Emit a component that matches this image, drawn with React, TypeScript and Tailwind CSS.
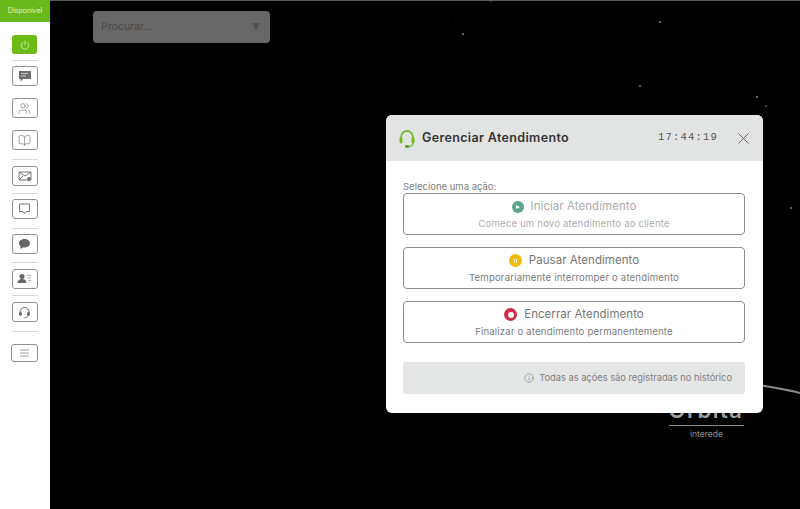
import React from "react";
import { Power, BookOpen, Users, X, Info } from "lucide-react";

const font = { fontFamily: '"Inter","Open Sans","Liberation Sans",sans-serif' };

function Side({ children, wide }: { children: React.ReactNode; wide?: boolean }) {
  return (
    <div className={`mr-px flex items-center justify-center rounded-[3px] border border-[#8f8f8f] bg-white ${wide ? "h-[18px] w-[27px]" : "h-[20px] w-[26px]"}`}>
      {children}
    </div>
  );
}
const Sep = () => <div className="mr-px h-px w-[26px] bg-[#d8d8d8]" />;

const stars: [number, number, number, string][] = [
  [462, 33, 2, "#888"], [659, 21, 2, "#777"], [639, 85, 2, "#777"], [756, 96, 2, "#999"],
  [765, 105, 1.5, "#555"], [490, 38, 1, "#2a2a2a"], [685, 100, 1, "#333"], [790, 207, 2, "#777"],
  [490, 0, 2, "#555"], [455, 18, 1, "#2a2a2a"],
];

function ActionBtn({ icon, title, sub, dim }: { icon: React.ReactNode; title: string; sub: string; dim?: boolean }) {
  return (
    <div className="flex h-[42px] flex-col items-center rounded-[4px] border border-[#8c8c8c] pt-[4px]">
      <div className="flex h-[17px] items-center gap-[7px]">
        {icon}
        <span className={`text-[11.5px] tracking-[0.05px] ${dim ? "text-[#acacac]" : "text-[#767676]"}`}>{title}</span>
      </div>
      <span className={`mt-[2px] text-[9.6px] leading-[14px] tracking-[0.17px] ${dim ? "text-[#adadad]" : "text-[#7c7c7c]"}`}>{sub}</span>
    </div>
  );
}

export default function App() {
  return (
    <div className="relative flex h-[509px] w-[800px] overflow-hidden bg-black" style={font}>
      <aside className="flex w-[50px] shrink-0 flex-col items-center bg-white">
        <div className="flex h-[22px] w-full items-center justify-center bg-[#69b81c] text-[7px] text-[#e4f3d4]">Disponível</div>
        <div className="mr-px mt-[13px] flex h-[19px] w-[25px] items-center justify-center rounded-[3px] bg-[#6cbb14]">
          <Power size={10} className="text-[#d8efbd]" strokeWidth={2} />
        </div>
        <div className="mt-[6px]"><Sep /></div>
        <div className="mt-[5px]"><Side>
          <svg width="14" height="12" viewBox="0 0 14 12"><path d="M1 1h12v8H5L2.500 11.500V9H1z" fill="#6e6e6e" /><path d="M3 3.500h7M3 6h5" stroke="#ddd" strokeWidth="0.8" /></svg>
        </Side></div>
        <div className="mt-[12px]"><Side><Users size={13} strokeWidth={1.2} className="text-[#777]" /></Side></div>
        <div className="mt-[12px]"><Side><BookOpen size={13} strokeWidth={1.2} className="text-[#777]" /></Side></div>
        <div className="mt-[9px]"><Sep /></div>
        <div className="mt-[6px]"><Side>
          <svg width="14" height="12" viewBox="0 0 14 12" fill="none" stroke="#777" strokeWidth="1"><path d="M1 2h12v8H1zM1 2l6 4 6-4M1 10l4-4" /><circle cx="11" cy="9" r="2" fill="#777" stroke="none" /></svg>
        </Side></div>
        <div className="mt-[7px]"><Sep /></div>
        <div className="mt-[5px]"><Side>
          <svg width="13" height="12" viewBox="0 0 13 12" fill="none" stroke="#777" strokeWidth="1"><path d="M1.500 1h10v7.500H8L6.500 10.500 5 8.500H1.500z" /></svg>
        </Side></div>
        <div className="mt-[9px]"><Sep /></div>
        <div className="mt-[5px]"><Side>
          <svg width="13" height="12" viewBox="0 0 13 12"><path d="M6.500 1C9.500 1 12 2.900 12 5.300S9.500 9.600 6.500 9.600c-.6 0-1.100-.1-1.600-.2L2 11l.7-2.600C1.700 7.600 1 6.500 1 5.300 1 2.900 3.500 1 6.500 1z" fill="#666" /></svg>
        </Side></div>
        <div className="mt-[8px]"><Sep /></div>
        <div className="mt-[6px]"><Side>
          <svg width="15" height="12" viewBox="0 0 15 12"><circle cx="5" cy="3.500" r="2.500" fill="#666" /><path d="M0.500 10c0-2.500 2-4 4.500-4s4.500 1.500 4.500 4z" fill="#666" /><path d="M10.500 2.500h3.500M10.500 5h3.500M11 7.500h3" stroke="#999" strokeWidth="0.8" /></svg>
        </Side></div>
        <div className="mt-[6px]"><Sep /></div>
        <div className="mt-[6px]"><Side>
          <svg width="13" height="13" viewBox="0 0 13 13" fill="none" stroke="#666" strokeWidth="1"><path d="M2 8V6a4.500 4.500 0 0 1 9 0v2" /><rect x="1.500" y="6.500" width="2" height="3" rx="1" fill="#666" /><rect x="9.500" y="6.500" width="2" height="3" rx="1" fill="#666" /><path d="M10 10c-.5 1.300-2 1.800-3.500 1.800" /></svg>
        </Side></div>
        <div className="mt-[9px]"><Sep /></div>
        <div className="mt-[12px]"><Side wide>
          <svg width="11" height="8" viewBox="0 0 11 8" stroke="#8a8a8a" strokeWidth="0.8"><path d="M1 1h9M1 4h9M1 7h9" /></svg>
        </Side></div>
      </aside>

      <main className="flex-1 border-t border-[#5a5a5a] pl-[43px] pt-[10px]">
        <div className="flex h-[32px] w-[177px] items-center justify-between rounded-[4px] bg-[#676767] pl-[8px] pr-[10px]">
          <span className="text-[10.5px] text-[#474747]">Procurar...</span>
          <span className="h-0 w-0 border-x-[4px] border-t-[8px] border-x-transparent border-t-[#525252]" />
        </div>
      </main>

      {stars.map(([x, y, s, c], i) => (
        <span key={i} className="absolute rounded-full" style={{ left: x, top: y, width: s, height: s, background: c }} />
      ))}

      <svg className="absolute left-[760px] top-[380px]" width="40" height="16" viewBox="0 0 40 16" fill="none">
        <path d="M0 5 C15 8 28 10 40 13" stroke="#8a8a8a" strokeWidth="2" />
      </svg>
      <div className="absolute left-[668px] top-[399px] w-[76px] text-center text-[22px] font-semibold leading-[22px] tracking-[1.500px] text-[#a0a0a0]">Orbita</div>
      <div className="absolute left-[669px] top-[425px] h-px w-[75px] bg-[#8a8a8a]" />
      <div className="absolute left-[669px] top-[429px] w-[75px] text-center text-[8.500px] leading-[11px] text-[#8d8d8d]">interede</div>

      <section className="absolute left-[386px] top-[115px] w-[377px] overflow-hidden rounded-[6px] bg-white">
        <header className="flex h-[46px] items-center bg-[#e2e3e3] pl-[13px] pr-[10px]">
          <svg width="16" height="19" viewBox="0 0 16 19" fill="none" className="mt-[1px]">
            <path d="M2.200 10V7.800a5.800 5.800 0 0 1 11.600 0V10" stroke="#72bb25" strokeWidth="1.800" />
            <rect x="0.500" y="8.500" width="3" height="6" rx="1.400" fill="#72bb25" />
            <rect x="12.500" y="8.500" width="3" height="6" rx="1.400" fill="#72bb25" />
            <path d="M14 14c0 2.300-2 3.500-4.500 3.500" stroke="#72bb25" strokeWidth="1.300" />
            <rect x="6" y="16.300" width="4" height="2.400" rx="1" fill="#4f8f1a" />
          </svg>
          <h2 className="ml-[7px] text-[12.500px] font-semibold tracking-[0.35px] text-[#343434]">Gerenciar Atendimento</h2>
          <span className="ml-auto text-[10.500px] tracking-[1.200px] text-[#555]" style={{ fontFamily: '"Liberation Mono",monospace' }}>17:44:19</span>
          <X size={19} strokeWidth={1.100} className="ml-[16px] text-[#585858]" />
        </header>
        <div className="pb-[19px] pl-[17px] pr-[18px]">
          <p className="mt-[19px] text-[9.500px] leading-[13px] text-[#808080]">Selecione uma ação:</p>
          <div className="flex flex-col gap-[12px]">
            <ActionBtn
              dim
              icon={<span className="flex h-[12px] w-[12px] items-center justify-center rounded-full bg-[#5ba58b]"><span className="ml-px h-0 w-0 border-y-[2.500px] border-l-[4px] border-y-transparent border-l-white" /></span>}
              title="Iniciar Atendimento"
              sub="Comece um novo atendimento ao cliente"
            />
            <ActionBtn
              icon={<span className="flex h-[13px] w-[13px] items-center justify-center gap-px rounded-full bg-[#f2b90f]"><span className="h-[4px] w-px bg-[#fff3c4]" /><span className="h-[4px] w-px bg-[#fff3c4]" /></span>}
              title="Pausar Atendimento"
              sub="Temporariamente interromper o atendimento"
            />
            <ActionBtn
              icon={<span className="flex h-[13px] w-[13px] items-center justify-center rounded-full bg-[#cf2e4a]"><span className="h-[6px] w-[6px] rounded-full bg-white" /></span>}
              title="Encerrar Atendimento"
              sub="Finalizar o atendimento permanentemente"
            />
          </div>
          <div className="mt-[19px] flex h-[32px] items-center justify-end gap-[5px] rounded-[3px] bg-[#e5e6e6] pr-[13px]">
            <Info size={10} strokeWidth={1.200} className="text-[#666]" />
            <span className="text-[9.300px] text-[#808080]">Todas as ações são registradas no histórico</span>
          </div>
        </div>
      </section>
    </div>
  );
}
